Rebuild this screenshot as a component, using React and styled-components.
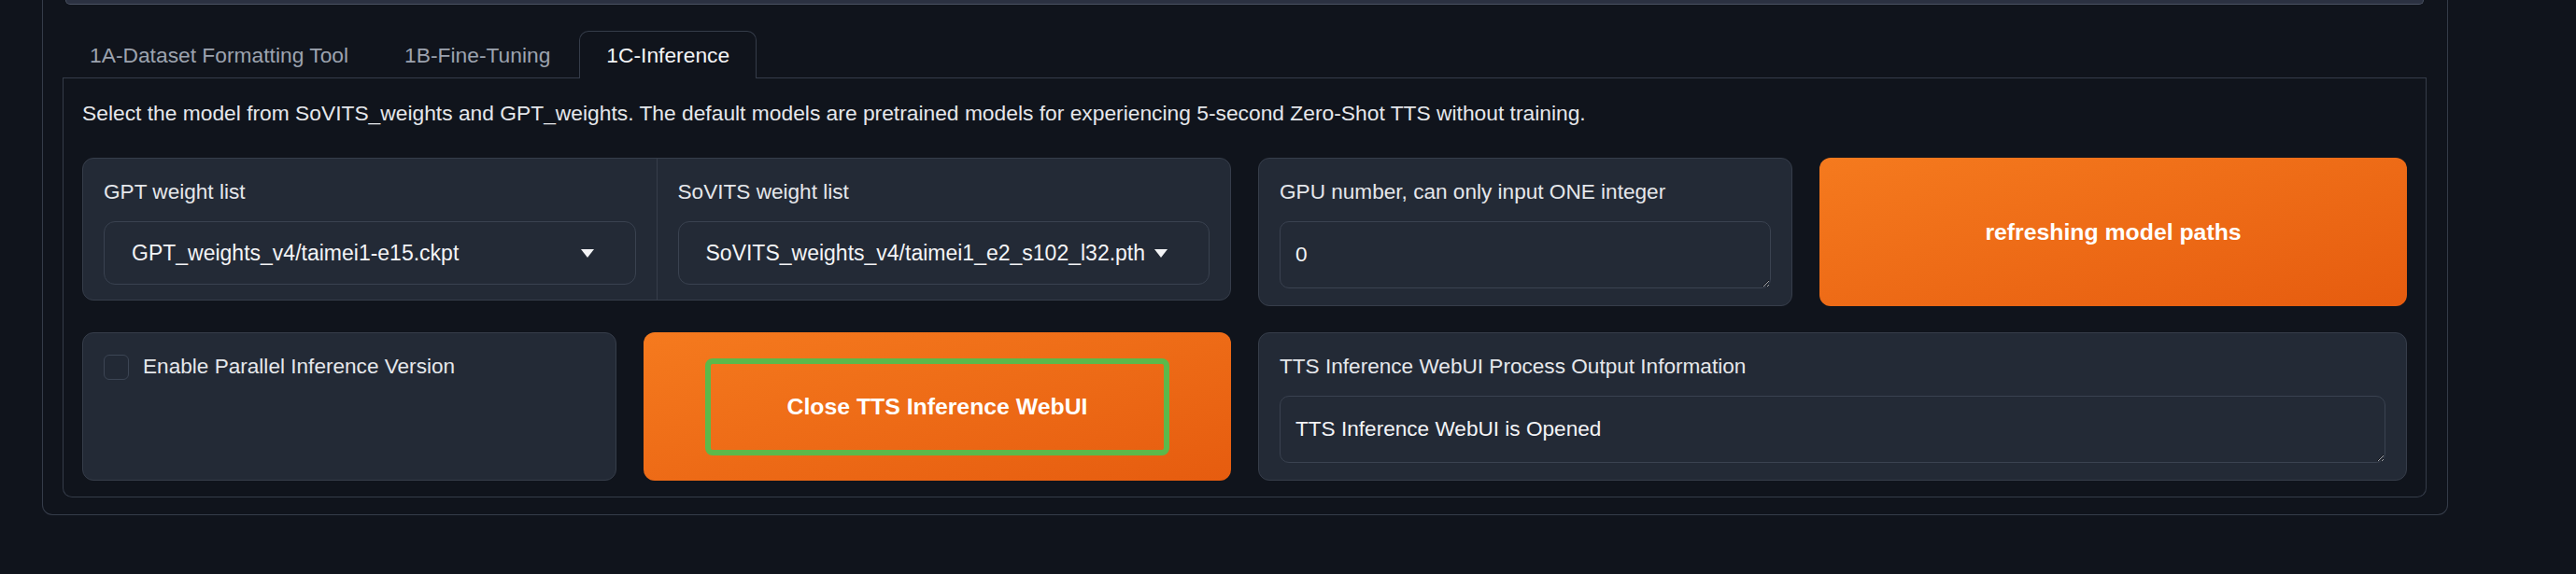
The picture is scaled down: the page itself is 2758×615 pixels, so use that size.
import React from "react";
import styled, { createGlobalStyle } from "styled-components";

const GlobalStyle = createGlobalStyle`
  html, body {
    margin: 0;
    padding: 0;
    background: #10141c;
  }
  body {
    font-family: "Liberation Sans", Arial, sans-serif;
    color: #e5e7eb;
  }
`;

const Page = styled.div`
  width: 2758px;
  height: 615px;
  overflow: hidden;
  box-sizing: border-box;
  padding-left: 45px;
  background: #10141c;
`;

const Outer = styled.div`
  width: 2576px;
  box-sizing: border-box;
  border: 1px solid #353c49;
  border-top: none;
  border-radius: 0 0 11px 11px;
  padding: 0 22px 18px 21px;
`;

const TopBar = styled.div`
  height: 4px;
  margin: 0 3px;
  background: #2b3141;
  border: 1px solid #4a5262;
  border-top: none;
  border-radius: 0 0 8px 8px;
`;

const TabNav = styled.div`
  display: flex;
  margin-top: 28px;
  border-bottom: 1px solid #353c49;
`;

const Tab = styled.div`
  height: 51px;
  box-sizing: border-box;
  margin-bottom: -1px;
  margin-right: 2px;
  padding: 0 28px;
  line-height: 50px;
  font-size: 22.8px;
  border: 1px solid ${(p) => (p.$active ? "#353c49" : "transparent")};
  border-bottom: none;
  border-radius: 10px 10px 0 0;
  background: ${(p) => (p.$active ? "#10141c" : "transparent")};
  color: ${(p) => (p.$active ? "#f3f4f6" : "#9ca3af")};
`;

const TabBody = styled.div`
  display: flex;
  flex-direction: column;
  gap: 28px;
  border: 1px solid #353c49;
  border-top: none;
  border-radius: 0 0 10px 10px;
  padding: 19px 20px 17px 20px;
`;

const Description = styled.div`
  font-size: 22.8px;
  line-height: 36px;
  padding-bottom: 2px;
  color: #e5e7eb;
`;

const Row = styled.div`
  display: grid;
  grid-template-columns: 1fr 1fr;
  gap: 29px;
  align-items: ${(p) => (p.$stretch ? "stretch" : "start")};
`;

const Half = styled.div`
  display: flex;
  gap: 29px;
  align-items: stretch;
`;

const Group = styled.div`
  flex: 1;
  display: flex;
  background: #232a36;
  border: 1px solid #363d4a;
  border-radius: 12px;
  overflow: hidden;
`;

const GroupItem = styled.div`
  flex: 1;
  padding: 20px 22px 16px 22px;
  & + & {
    border-left: 1px solid #363d4a;
  }
`;

const Block = styled.div`
  flex: ${(p) => (p.$fixed ? "0 0 572px" : "1")};
  box-sizing: border-box;
  background: #232a36;
  border: 1px solid #363d4a;
  border-radius: 12px;
  padding: 20px 22px 18px 22px;
`;

const Label = styled.div`
  font-size: 22.6px;
  line-height: 32px;
  margin-bottom: 15px;
  color: #e5e7eb;
`;

const Select = styled.div`
  height: 68px;
  box-sizing: border-box;
  display: flex;
  align-items: center;
  justify-content: space-between;
  padding: 0 44px 0 29px;
  border: 1px solid #3a4250;
  border-radius: 12px;
  font-size: 23px;
  color: #f3f4f6;
`;

const TextArea = styled.textarea`
  display: block;
  width: 100%;
  height: 72px;
  box-sizing: border-box;
  margin: 0;
  padding: 18px 16px;
  background: #232a36;
  border: 1px solid #3a4250;
  border-radius: 10px;
  font-family: "Liberation Sans", Arial, sans-serif;
  font-size: 22.6px;
  line-height: 34px;
  color: #f3f4f6;
  resize: vertical;
  outline: none;
  color-scheme: dark;
`;

const CheckRow = styled.label`
  display: flex;
  align-items: center;
  gap: 15px;
  font-size: 22.6px;
  line-height: 32px;
  color: #e5e7eb;
`;

const CheckBox = styled.span`
  width: 27px;
  height: 27px;
  box-sizing: border-box;
  border: 1px solid #3c4554;
  border-radius: 6px;
  background: #222935;
`;

const PrimaryButton = styled.button`
  flex: 1;
  display: flex;
  align-items: center;
  justify-content: center;
  min-height: 159px;
  margin: 0;
  padding: 0;
  border: none;
  border-radius: 12px;
  background: linear-gradient(to bottom right, #f57a1e, #e65c0f);
  color: #ffffff;
  font-family: "Liberation Sans", Arial, sans-serif;
  font-size: 24.8px;
  font-weight: 700;
  cursor: pointer;
`;

const Highlight = styled.span`
  display: flex;
  align-items: center;
  justify-content: center;
  width: 497px;
  height: 104px;
  box-sizing: border-box;
  border: 6px solid #5cb94a;
  border-radius: 8px;
`;

function Arrow() {
  return (
    <svg width="14" height="9" viewBox="0 0 14 9">
      <polygon points="0,0 14,0 7,9" fill="#f3f4f6" />
    </svg>
  );
}

export default function App() {
  return (
    <>
      <GlobalStyle />
      <Page>
        <Outer>
          <TopBar />
          <TabNav>
            <Tab>1A-Dataset Formatting Tool</Tab>
            <Tab>1B-Fine-Tuning</Tab>
            <Tab $active>1C-Inference</Tab>
          </TabNav>
          <TabBody>
            <Description>
              Select the model from SoVITS_weights and GPT_weights. The default
              models are pretrained models for experiencing 5-second Zero-Shot
              TTS without training.
            </Description>

            <Row>
              <Half>
                <Group>
                  <GroupItem>
                    <Label>GPT weight list</Label>
                    <Select>
                      <span>GPT_weights_v4/taimei1-e15.ckpt</span>
                      <Arrow />
                    </Select>
                  </GroupItem>
                  <GroupItem>
                    <Label>SoVITS weight list</Label>
                    <Select>
                      <span>SoVITS_weights_v4/taimei1_e2_s102_l32.pth</span>
                      <Arrow />
                    </Select>
                  </GroupItem>
                </Group>
              </Half>
              <Half>
                <Block $fixed>
                  <Label>GPU number, can only input ONE integer</Label>
                  <TextArea defaultValue="0" rows={1} />
                </Block>
                <PrimaryButton type="button">refreshing model paths</PrimaryButton>
              </Half>
            </Row>

            <Row $stretch>
              <Half>
                <Block $fixed>
                  <CheckRow>
                    <CheckBox />
                    Enable Parallel Inference Version
                  </CheckRow>
                </Block>
                <PrimaryButton type="button">
                  <Highlight>Close TTS Inference WebUI</Highlight>
                </PrimaryButton>
              </Half>
              <Half>
                <Block>
                  <Label>TTS Inference WebUI Process Output Information</Label>
                  <TextArea defaultValue="TTS Inference WebUI is Opened" rows={1} />
                </Block>
              </Half>
            </Row>
          </TabBody>
        </Outer>
      </Page>
    </>
  );
}
